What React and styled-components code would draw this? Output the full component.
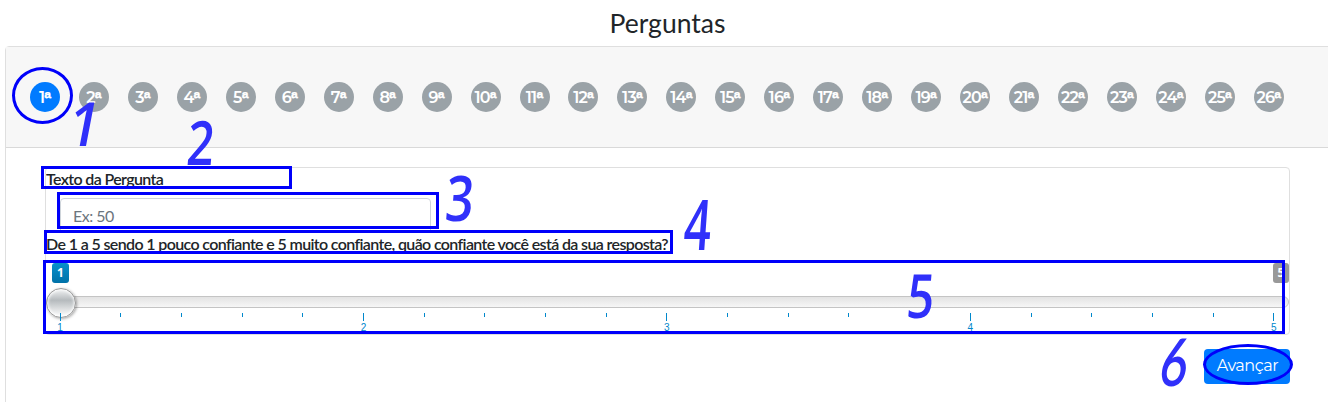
import React from "react";
import styled, { createGlobalStyle } from "styled-components";

const GlobalStyle = createGlobalStyle`
  *, *::before, *::after { box-sizing: border-box; }
  body { margin: 0; background: #fff; color: #212529; font-family: Lato, sans-serif; overflow: hidden; }
`;

const Page = styled.main`
  position: relative;
  height: 402px;
  overflow: hidden;
`;

const Title = styled.h1`
  margin: 0;
  height: 46px;
  padding: 7px 0 0 7px;
  font-size: 26.5px;
  line-height: 32px;
  font-weight: 400;
  text-align: center;
`;

const Card = styled.section`
  margin-left: 5px;
  width: 1330px;
  height: 380px;
  border: 1px solid #dfdfdf;
  border-radius: 4px;
`;

const StepBar = styled.header`
  display: flex;
  align-items: center;
  justify-content: space-between;
  height: 101px;
  padding: 0 50px 0 24px;
  background: #f7f7f7;
  border-bottom: 1px solid #d9d9d9;
`;

const Step = styled.span`
  display: flex;
  justify-content: center;
  width: 30px;
  height: 30px;
  border-radius: 50%;
  background: ${(p) => (p.$active ? "#007bff" : "#9aa2a7")};
  color: #fff;
  font: 600 16px/31px Montserrat, Inter, sans-serif;
  letter-spacing: -0.8px;
  white-space: nowrap;
`;

const Ordinal = styled.span`
  font: 700 18.5px/33px "Liberation Sans", sans-serif;
  letter-spacing: 0;
  -webkit-text-stroke: 0.3px #fff;
`;

const Body = styled.div`
  width: 1284px;
  padding: 19px 0 0 39px;
`;

const Question = styled.div`
  height: 168px;
  border: 1px solid #dfdfdf;
  border-radius: 4px;
  overflow: hidden;
`;

const Label = styled.label`
  display: block;
  height: ${(p) => p.$height}px;
  padding-top: ${(p) => p.$top}px;
  font-size: 16px;
  line-height: 20px;
  font-weight: 600;
  letter-spacing: -0.63px;
  white-space: nowrap;
`;

const FieldClip = styled.div`
  height: 32px;
  padding-left: 14px;
  overflow: hidden;
`;

const Field = styled.input`
  display: block;
  width: 371px;
  height: 36px;
  padding: 0 12px 2px;
  border: 1px solid #ced4da;
  border-radius: 4px;
  font: 400 16px Lato, sans-serif;
  letter-spacing: -0.5px;
  &::placeholder { color: #6c757d; opacity: 1; }
`;

const Slider = styled.div`
  padding-top: 7px;
`;

const Limits = styled.div`
  display: flex;
  justify-content: space-between;
  padding-left: 6px;
`;

const Badge = styled.span`
  width: ${(p) => (p.$muted ? 16 : 17)}px;
  height: 20px;
  border-radius: 3px;
  background: ${(p) => (p.$muted ? "#999" : "linear-gradient(#0790cc, #0072a8)")};
  color: #fff;
  font: 700 12px/19px "Open Sans", sans-serif;
  text-align: center;
`;

const Track = styled.div`
  display: flex;
  align-items: center;
  height: 12px;
  margin-top: 13px;
  border: 1px solid #c4c4c4;
  border-radius: 6px;
  background: linear-gradient(#e3e3e3, #f6f6f6);
`;

const Handle = styled.span`
  flex: none;
  width: 30px;
  height: 30px;
  margin: 2px 0 0 -1px;
  border: 1px solid #999;
  border-radius: 50%;
  background: linear-gradient(#f2f3f4 0%, #b5babd 40%, #e2e4e5 75%, #fff 100%);
  box-shadow: inset 0 0 3px 1px #fff, 1px 1px 3px rgba(0, 0, 0, 0.35);
`;

const Scale = styled.div`
  display: flex;
  justify-content: space-between;
  padding: 5px 10px 0 9px;
`;

const Tick = styled.span`
  display: flex;
  flex-direction: column;
  align-items: center;
  width: 10px;
  color: #0088cc;
  font: 400 10px/11px "Liberation Sans", sans-serif;
  &::before {
    content: "";
    width: 1px;
    height: ${(p) => (p.$major ? 8 : 4)}px;
    margin-bottom: 1px;
    background: #0088cc;
  }
`;

const Actions = styled.footer`
  display: flex;
  justify-content: flex-end;
  padding-top: 14px;
`;

const Button = styled.button`
  width: 86px;
  height: 35px;
  padding: 0 0 2px 1px;
  border: 0;
  border-radius: 4px;
  background: #007bff;
  color: #fff;
  font: 400 16px Montserrat, Inter, sans-serif;
  letter-spacing: -0.45px;
`;

const Outline = styled.div`
  position: absolute;
  left: ${(p) => p.$x}px;
  top: ${(p) => p.$y}px;
  width: ${(p) => p.$w}px;
  height: ${(p) => p.$h}px;
  border: 3px solid #0000fa;
  border-radius: ${(p) => (p.$round ? "50%" : 0)};
  pointer-events: none;
`;

const Marker = styled.span`
  position: absolute;
  left: ${(p) => p.$x}px;
  top: ${(p) => p.$y}px;
  width: 40px;
  height: 48px;
  margin: -25px 0 0 -20px;
  color: #3030fa;
  font: 600 ${(p) => p.$size || 61}px/48px ${(p) => p.$face || '"Open Sans"'}, sans-serif;
  text-align: center;
  transform: scaleX(${(p) => p.$stretch || 0.78}) skewX(${(p) => p.$slant || -6}deg);
`;

const steps = Array.from({ length: 26 }, (_, i) => i + 1);
const ticks = Array.from({ length: 21 }, (_, i) => i);

export default function App() {
  return (
    <Page>
      <GlobalStyle />
      <Title>Perguntas</Title>
      <Card>
        <StepBar>
          {steps.map((n) => <Step key={n} $active={n === 1}>{n}<Ordinal>ª</Ordinal></Step>)}
        </StepBar>
        <Body>
          <Question>
            <Label $height={30} $top={1}>Texto da Pergunta</Label>
            <FieldClip><Field placeholder="Ex: 50" /></FieldClip>
            <Label $height={26} $top={4}>
              De 1 a 5 sendo 1 pouco confiante e 5 muito confiante, quão confiante você está da sua resposta?
            </Label>
            <Slider>
              <Limits><Badge>1</Badge><Badge $muted>5</Badge></Limits>
              <Track><Handle /></Track>
              <Scale>
                {ticks.map((i) => (
                  <Tick key={i} $major={i % 5 === 0}>{i % 5 === 0 ? i / 5 + 1 : ""}</Tick>
                ))}
              </Scale>
            </Slider>
          </Question>
          <Actions><Button>Avançar</Button></Actions>
        </Body>
      </Card>

      <Outline $x={12} $y={67} $w={61} $h={57} $round />
      <Outline $x={41} $y={166} $w={251} $h={23} />
      <Outline $x={57} $y={192} $w={382} $h={37} />
      <Outline $x={44} $y={230} $w={629} $h={24} />
      <Outline $x={43} $y={260} $w={1242} $h={74} />
      <Outline $x={1203} $y={344} $w={90} $h={41} $round />
      <Marker $x={85} $y={124} $slant={-12} $stretch={0.9}>1</Marker>
      <Marker $x={201} $y={143}>2</Marker>
      <Marker $x={460} $y={198} $size={63}>3</Marker>
      <Marker $x={698} $y={224} $size={70} $stretch={0.68}>4</Marker>
      <Marker $x={921} $y={296}>5</Marker>
      <Marker $x={1175} $y={362} $size={66} $slant={-12} $stretch={0.72} $face="Lato">6</Marker>
    </Page>
  );
}
